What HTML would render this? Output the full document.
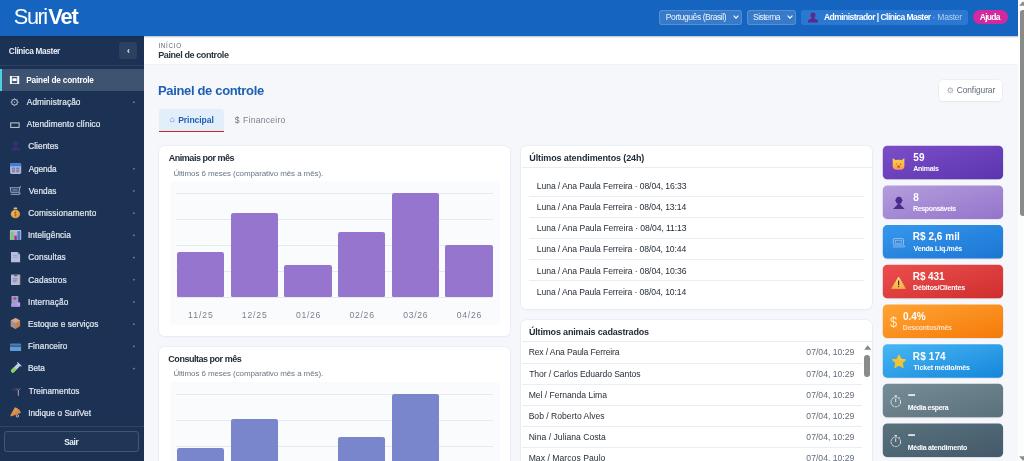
<!DOCTYPE html>
<html lang="pt-BR"><head><meta charset="utf-8"><title>SuriVet - Painel de controle</title>
<style>
html,body{margin:0;padding:0}
body{width:1024px;height:461px;overflow:hidden;position:relative;background:#f5f7fb;font-family:"Liberation Sans",sans-serif}
.a{position:absolute;box-sizing:border-box}
.t{position:absolute;white-space:pre;font-family:"Liberation Sans",sans-serif}
.card{position:absolute;box-sizing:border-box;background:#fff;border-radius:5.5px;box-shadow:0 0 0 .6px rgba(225,230,240,.9),0 1px 2px rgba(30,50,90,.05)}
.hl{position:absolute;height:1px;background:#eaedf1}
.gl{position:absolute;height:1px;background:#e6e9ee;left:176px;width:316.8px}
.bar{position:absolute;width:47.3px;border-radius:2.2px 2.2px 1.5px 1.5px}
.b1{background:#9575cd}.b2{background:#7986cb}
.sc{position:absolute;left:882.8px;width:120.3px;height:33.3px;border-radius:4.5px;box-shadow:0 1px 2px rgba(20,30,60,.12)}
.dot{position:absolute;left:133.1px;width:1.7px;height:1.7px;background:#6d83a8;transform:rotate(45deg)}
svg{position:absolute;overflow:visible}
#w,#tx{position:absolute;left:0;top:0;width:1024px;height:461px;overflow:hidden;filter:blur(.3px)}
</style></head><body><div id="w">

<!-- ================= HEADER ================= -->
<div class="a" id="hdr" style="left:0;top:0;width:1017.6px;height:36px;background:#1565c0"></div>
<div class="a" style="left:659px;top:9.5px;width:82.8px;height:15.5px;border-radius:3px;background:rgba(255,255,255,.14);border:1px solid rgba(255,255,255,.16)"></div>
<svg style="left:733px;top:15.2px" width="6" height="4" viewBox="0 0 6 4"><path d="M.6.7 3 3.1 5.4.7" fill="none" stroke="#fff" stroke-width="1.1"/></svg>
<div class="a" style="left:746.7px;top:9.5px;width:49px;height:15.5px;border-radius:3px;background:rgba(255,255,255,.14);border:1px solid rgba(255,255,255,.16)"></div>
<svg style="left:786.8px;top:15.2px" width="6" height="4" viewBox="0 0 6 4"><path d="M.6.7 3 3.1 5.4.7" fill="none" stroke="#fff" stroke-width="1.1"/></svg>
<div class="a" style="left:800.8px;top:9.5px;width:167.2px;height:15.3px;border-radius:3px;background:#2a78d2"></div>
<svg style="left:808.4px;top:11.6px" width="10" height="10.6" viewBox="0 0 20 21"><path d="M10 1c3 0 5 2.300 5 5.400 0 2-.8 3.800-2 4.900v1.500c3.500.9 6.500 2.600 7 5.600V21H0v-2.600c.5-3 3.500-4.700 7-5.600v-1.500C5.800 10.200 5 8.400 5 6.400 5 3.300 7 1 10 1z" fill="#5b2b8c"/></svg>
<div class="a" style="left:973.4px;top:9.8px;width:34.6px;height:14.7px;border-radius:8px;background:#d328a0"></div>

<!-- ================= SIDEBAR ================= -->
<div class="a" id="sb" style="left:0;top:36px;width:144px;height:425px;background:#1c3254"></div>
<div class="a" style="left:0;top:65.3px;width:144px;height:1px;background:rgba(255,255,255,.07)"></div>
<div class="a" style="left:119px;top:42.2px;width:18.2px;height:17.2px;border-radius:3px;background:rgba(255,255,255,.075)"></div>
<svg style="left:126.6px;top:49px" width="2.8" height="4" viewBox="0 0 2.8 4"><path d="M2.200.4.8 2l1.400 1.600" fill="none" stroke="#e6ebf2" stroke-width="1.050"/></svg>
<div class="a" style="left:0;top:68.8px;width:144px;height:22.5px;background:#3e5370"></div>
<div class="a" style="left:0;top:68.8px;width:1.5px;height:22.5px;background:#4dd0e1"></div>
<svg style="left:0;top:0" width="144" height="461" viewBox="0 0 144 461">
<!-- dashboard -->
<rect x="9.9" y="75.9" width="9.3" height="8" rx=".5" fill="#fff"/><rect x="11.9" y="76.7" width="5.3" height="6.500" fill="#3e5370"/><rect x="12.5" y="78.3" width="4.1" height="2.800" fill="#fff"/>
<!-- gear -->
<g stroke="#c6cfdb" fill="none"><circle cx="14.55" cy="102.2" r="2.900" stroke-width=".95"/><path d="M14.550 98.200v1.200M14.550 105v1.200M10.550 102.200h1.200M17.350 102.200h1.200M11.750 99.400l.8.800M16.550 104.200l.8.800M17.350 99.400l-.8.800M12.550 104.200l-.8.800" stroke-width=".9" opacity=".85"/></g><circle cx="14.55" cy="102.2" r=".6" fill="#c6cfdb"/>
<!-- rectangle -->
<rect x="10.700" y="122.900" width="8.400" height="4.500" fill="none" stroke="#c6cfdb" stroke-width="1"/>
<!-- clientes bust -->
<g fill="#3a2f76" opacity=".9"><circle cx="15.800" cy="143.600" r="2.500"/><path d="M11.200 150.600c.3-2.700 2.200-3.800 4.600-3.800s4.300 1.100 4.600 3.800z"/></g>
<!-- calendar -->
<rect x="10.100" y="163.200" width="11.100" height="10.700" rx="1.300" fill="#aeb4d8"/><path d="M10.100 166.200v-1.700a1.300 1.300 0 0 1 1.300-1.300h8.500a1.300 1.300 0 0 1 1.300 1.300v1.700z" fill="#3f7ad4"/><g fill="#7980ab"><rect x="12" y="167.600" width="3.100" height="4.600" rx=".4"/><rect x="16.200" y="167.600" width="3.100" height="4.600" rx=".4"/></g><path d="M12 169.900h7.300" stroke="#aeb4d8" stroke-width=".6"/>
<!-- cart -->
<g fill="none" stroke="#97a6c8" stroke-width="1.050"><path d="M10.300 187.700h9.400l-.7 4.600h-8z"/><path d="M19.600 187.700l1.100-1.300"/><path d="M10.800 194.300h9"/><path d="M19 192.300l1.500 1.600"/></g><rect x="12.300" y="189" width="5.400" height="2.300" fill="#5f7099"/>
<!-- money bag -->
<defs><radialGradient id="mb" cx=".45" cy=".45" r=".6"><stop offset="0" stop-color="#f3c56a"/><stop offset="1" stop-color="#d39034"/></radialGradient></defs>
<path d="M14 207.500h2.800l.6 1.800h-4z" fill="#e9c27a"/><ellipse cx="15.400" cy="214" rx="4.700" ry="4.300" fill="url(#mb)"/><path d="M15.400 211.400v5.200M16.500 212.500c-.5-.6-2.200-.6-2.200.4s2.200.6 2.200 1.700-1.800 1-2.300.3" stroke="#9a5a1e" stroke-width=".7" fill="none"/>
<!-- bar chart -->
<rect x="9.900" y="230" width="11.300" height="10" rx=".8" fill="#b4bccf"/><rect x="10.800" y="231.600" width="2.900" height="8.400" fill="#7ac47c"/><rect x="14.300" y="235.400" width="2.500" height="4.600" fill="#b0307a"/><rect x="14.300" y="232" width="2.500" height="3.400" fill="#c9a9c8"/><rect x="17.400" y="231.200" width="2.800" height="8.800" fill="#3f7fd0"/>
<!-- document -->
<path d="M11 252h6.500l2.600 2.600v7.600H11z" fill="#b7bde0"/><path d="M17.500 252v2.600h2.600z" fill="#8d93bd"/><path d="M12.800 255.600h4.600M12.800 257.200h5.400" stroke="#9b93b8" stroke-width=".7"/>
<!-- clipboard -->
<rect x="11" y="274.500" width="9.300" height="10.400" rx=".7" fill="#c4a494"/><rect x="11" y="274.900" width="8" height="10" rx=".5" fill="#b5bbdd"/><rect x="14" y="274.200" width="3.200" height="2" rx=".5" fill="#596079"/><path d="M12.800 278.700h4.600M12.800 280.200h4.600M12.800 281.700h3.600" stroke="#7b82a8" stroke-width=".8"/>
<!-- hospital -->
<rect x="11.500" y="296" width="6.800" height="10.700" rx=".6" fill="#9a9ec4"/><rect x="16.500" y="302.400" width="3.600" height="4.300" fill="#c0a3e8"/><rect x="11.200" y="303.600" width="7" height="3.100" fill="#b195e0"/><path d="M14.900 296.900v3.200M13.300 298.500h3.200" stroke="#b03a7a" stroke-width="1.100"/>
<!-- package -->
<path d="M15.500 318l4.600 2.600v5.600l-4.600 2.900-4.700-2.900v-5.600z" fill="#bd8354"/><path d="M15.500 318l4.600 2.600-4.600 2.600-4.700-2.600z" fill="#d2ad8c"/><path d="M10.800 320.600l4.700 2.600v5.900l-4.700-2.900z" fill="#a58f92"/>
<!-- credit card -->
<rect x="10" y="343.700" width="11.100" height="7.400" rx=".9" fill="#5f9bd4"/><rect x="10" y="345.300" width="11.100" height="1.500" fill="#2b5887"/><path d="M10 345.300v-.7a.9.900 0 0 1 .9-.9h9.300a.9.900 0 0 1 .9.900v.7z" fill="#4a7db5"/>
<!-- test tube -->
<g transform="rotate(45 15.400 368.200)"><rect x="13.700" y="362.600" width="3.500" height="11" rx="1.700" fill="#b9d2de"/><path d="M13.700 368.400h3.500v3.500a1.750 1.750 0 0 1-3.500 0z" fill="#8fd05a"/><rect x="12.600" y="362.200" width="5.700" height="1.100" fill="#c9dde6"/></g>
<!-- treinamentos -->
<path d="M18.300 395.800v-5.300M18.300 390.600l-1.800-2M18.300 390.600l1.800-2" stroke="#b9c0e0" stroke-width="1" fill="none" opacity=".85"/><path d="M10.800 389.600l4.800-2 4.800 2-4.800 2z" fill="#5b3560" opacity=".6"/>
<!-- megaphone -->
<defs><linearGradient id="mg" x1="0" y1="0" x2="1" y2="1"><stop offset="0" stop-color="#eca858"/><stop offset="1" stop-color="#cf7535"/></linearGradient></defs>
<path d="M14.900 407.200c2.600.6 5.400 3 6.200 5.500l-9.400 3.500c-.9.300-1.500-.4-1.100-1.200z" fill="url(#mg)"/><circle cx="17.400" cy="415.900" r="1.200" fill="none" stroke="#eef0f6" stroke-width=".7"/>
<!-- carets --><path d="M133.900 101.05l1.100 1.100-1.100 1.100-1.100-1.100z" fill="#6f86ad"/><path d="M133.900 167.65l1.100 1.100-1.100 1.100-1.100-1.100z" fill="#6f86ad"/><path d="M133.900 189.85l1.100 1.100-1.100 1.100-1.100-1.100z" fill="#6f86ad"/><path d="M133.900 212.05l1.100 1.100-1.100 1.100-1.100-1.100z" fill="#6f86ad"/><path d="M133.900 234.25l1.100 1.100-1.100 1.100-1.100-1.100z" fill="#6f86ad"/><path d="M133.900 256.45l1.100 1.100-1.100 1.100-1.100-1.100z" fill="#6f86ad"/><path d="M133.900 278.65l1.100 1.100-1.100 1.100-1.100-1.100z" fill="#6f86ad"/><path d="M133.900 300.85l1.100 1.100-1.100 1.100-1.100-1.100z" fill="#6f86ad"/><path d="M133.900 323.05l1.100 1.100-1.100 1.100-1.100-1.100z" fill="#6f86ad"/><path d="M133.900 345.25l1.100 1.100-1.100 1.100-1.100-1.100z" fill="#6f86ad"/><path d="M133.900 367.45l1.100 1.100-1.100 1.100-1.100-1.100z" fill="#6f86ad"/>
</svg>

<div class="a" style="left:0;top:425.5px;width:144px;height:1px;background:rgba(255,255,255,.09)"></div>
<div class="a" style="left:4.1px;top:431px;width:135px;height:21.4px;border-radius:3.5px;border:1px solid rgba(255,255,255,.16);background:rgba(255,255,255,.02)"></div>

<!-- ================= MAIN TOP ================= -->
<div class="a" style="left:144px;top:36px;width:873.6px;height:29px;background:#fff;border-bottom:1px solid #f0f2f7"></div>
<div class="a" style="left:939px;top:80px;width:63px;height:20.5px;border-radius:4px;background:#fff;box-shadow:0 0 0 .5px #e4e8ef,0 1px 2px rgba(30,50,90,.07)"></div>
<svg style="left:946.6px;top:87.4px" width="6.600" height="6.600" viewBox="0 0 12 12"><circle cx="6" cy="6" r="3.900" fill="none" stroke="#9aa3b0" stroke-width="1.500"/><circle cx="6" cy="6" r="1" fill="#9aa3b0"/><path d="M6 .4v1.700M6 9.900v1.700M.4 6h1.700M9.900 6h1.700M2 2l1.200 1.200M8.800 8.800L10 10M10 2L8.800 3.200M3.200 8.800L2 10" stroke="#9aa3b0" stroke-width="1.500"/></svg>
<div class="a" style="left:158.7px;top:108.7px;width:65.1px;height:23.8px;border-radius:3px 3px 0 0;background:#e3eefb;border-bottom:1.5px solid #c62828"></div>
<svg style="left:169.8px;top:117.3px" width="4.600" height="5.200" viewBox="0 0 9 10"><path d="M4.500 1 1 4.600V9h7V4.600z" fill="none" stroke="#7fa5d8" stroke-width="1.400"/></svg>

<!-- ================= CARD: Animais por mes ================= -->
<div class="card" style="left:159px;top:146px;width:351px;height:190px"></div>
<div class="a" style="left:170px;top:181px;width:330px;height:144px;border-radius:4.5px;background:#fafbfd"></div>
<div class="gl" style="top:192.7px"></div><div class="gl" style="top:218.7px"></div><div class="gl" style="top:244.7px"></div><div class="gl" style="top:270.7px"></div><div class="gl" style="top:296.7px"></div>
<div class="bar b1" style="left:177.1px;top:251.9px;height:45.1px"></div>
<div class="bar b1" style="left:230.7px;top:213px;height:84px"></div>
<div class="bar b1" style="left:284.4px;top:264.7px;height:32.3px"></div>
<div class="bar b1" style="left:338px;top:232.1px;height:64.9px"></div>
<div class="bar b1" style="left:391.6px;top:193.2px;height:103.8px"></div>
<div class="bar b1" style="left:445.3px;top:244.9px;height:52.1px"></div>

<!-- ================= CARD: Consultas por mes ================= -->
<div class="card" style="left:159px;top:347px;width:351px;height:190px"></div>
<div class="a" style="left:170px;top:382px;width:330px;height:144px;border-radius:4.5px;background:#fafbfd"></div>
<div class="gl" style="top:393.9px"></div><div class="gl" style="top:419.9px"></div><div class="gl" style="top:445.9px"></div>
<div class="bar b2" style="left:177.1px;top:448.2px;height:50px"></div>
<div class="bar b2" style="left:230.7px;top:419.2px;height:79px"></div>
<div class="bar b2" style="left:338px;top:437px;height:61px"></div>
<div class="bar b2" style="left:391.6px;top:394.4px;height:104px"></div>

<!-- ================= CARD: Ultimos atendimentos ================= -->
<div class="card" style="left:521px;top:146px;width:351px;height:163px"></div>
<div class="hl" style="left:521.6px;top:166.8px;width:350.3px;background:#e9ecf1"></div>
<div class="hl" style="left:528.9px;top:195.5px;width:335px"></div>
<div class="hl" style="left:528.9px;top:216.7px;width:335px"></div>
<div class="hl" style="left:528.9px;top:237.9px;width:335px"></div>
<div class="hl" style="left:528.9px;top:259.1px;width:335px"></div>
<div class="hl" style="left:528.9px;top:280.3px;width:335px"></div>

<!-- ================= CARD: Ultimos animais ================= -->
<div class="card" style="left:521px;top:320px;width:351px;height:180px"></div>
<div class="hl" style="left:521.6px;top:341.1px;width:350.3px;background:#e9ecf1"></div>
<div class="hl" style="left:521.6px;top:362.6px;width:340.7px"></div>
<div class="hl" style="left:521.6px;top:383.8px;width:340.7px"></div>
<div class="hl" style="left:521.6px;top:405px;width:340.7px"></div>
<div class="hl" style="left:521.6px;top:426.2px;width:340.7px"></div>
<div class="hl" style="left:521.6px;top:447.4px;width:340.7px"></div>
<svg style="left:863.8px;top:344.8px" width="7.400" height="5" viewBox="0 0 7.400 5"><path d="M3.700.2 7.200 4.800H.2z" fill="#858585"/></svg>
<div class="a" style="left:864.2px;top:354.6px;width:5.8px;height:22.2px;border-radius:2.900px;background:#8a8a8a"></div>

<!-- ================= STAT CARDS ================= -->
<svg style="left:0;top:0" width="1024" height="461" viewBox="0 0 1024 461"><defs>
<linearGradient id="sg0" x1="0" y1="0" x2="1" y2="1"><stop offset="0" stop-color="#7c4ec8"/><stop offset="1" stop-color="#5b35ae"/></linearGradient>
<linearGradient id="sg1" x1="0" y1="0" x2="1" y2="1"><stop offset="0" stop-color="#b49edc"/><stop offset="1" stop-color="#9474cc"/></linearGradient>
<linearGradient id="sg2" x1="0" y1="0" x2="1" y2="1"><stop offset="0" stop-color="#3797ed"/><stop offset="1" stop-color="#1b76d3"/></linearGradient>
<linearGradient id="sg3" x1="0" y1="0" x2="1" y2="1"><stop offset="0" stop-color="#ec4e4e"/><stop offset="1" stop-color="#cf2e2e"/></linearGradient>
<linearGradient id="sg4" x1="0" y1="0" x2="1" y2="1"><stop offset="0" stop-color="#ffa535"/><stop offset="1" stop-color="#f57a08"/></linearGradient>
<linearGradient id="sg5" x1="0" y1="0" x2="1" y2="1"><stop offset="0" stop-color="#48b7f4"/><stop offset="1" stop-color="#1586db"/></linearGradient>
<linearGradient id="sg6" x1="0" y1="0" x2="1" y2="1"><stop offset="0" stop-color="#768d98"/><stop offset="1" stop-color="#5a717c"/></linearGradient>
<linearGradient id="sg7" x1="0" y1="0" x2="1" y2="1"><stop offset="0" stop-color="#59727d"/><stop offset="1" stop-color="#44596a"/></linearGradient>
</defs>
<rect x="882.8" y="146.60" width="120.3" height="33.5" rx="4.500" fill="#1e2a4a" opacity=".10"/>
<rect x="882.8" y="145.70" width="120.3" height="33.5" rx="4.500" fill="url(#sg0)"/>
<rect x="882.8" y="186.29" width="120.3" height="33.5" rx="4.500" fill="#1e2a4a" opacity=".10"/>
<rect x="882.8" y="185.39" width="120.3" height="33.5" rx="4.500" fill="url(#sg1)"/>
<rect x="882.8" y="225.98" width="120.3" height="33.5" rx="4.500" fill="#1e2a4a" opacity=".10"/>
<rect x="882.8" y="225.08" width="120.3" height="33.5" rx="4.500" fill="url(#sg2)"/>
<rect x="882.8" y="265.67" width="120.3" height="33.5" rx="4.500" fill="#1e2a4a" opacity=".10"/>
<rect x="882.8" y="264.77" width="120.3" height="33.5" rx="4.500" fill="url(#sg3)"/>
<rect x="882.8" y="305.36" width="120.3" height="33.5" rx="4.500" fill="#1e2a4a" opacity=".10"/>
<rect x="882.8" y="304.46" width="120.3" height="33.5" rx="4.500" fill="url(#sg4)"/>
<rect x="882.8" y="345.05" width="120.3" height="33.5" rx="4.500" fill="#1e2a4a" opacity=".10"/>
<rect x="882.8" y="344.15" width="120.3" height="33.5" rx="4.500" fill="url(#sg5)"/>
<rect x="882.8" y="384.74" width="120.3" height="33.5" rx="4.500" fill="#1e2a4a" opacity=".10"/>
<rect x="882.8" y="383.84" width="120.3" height="33.5" rx="4.500" fill="url(#sg6)"/>
<rect x="882.8" y="424.43" width="120.3" height="33.5" rx="4.500" fill="#1e2a4a" opacity=".10"/>
<rect x="882.8" y="423.53" width="120.3" height="33.5" rx="4.500" fill="url(#sg7)"/>
</svg>
<svg style="left:0;top:0" width="1024" height="461" viewBox="0 0 1024 461">
<defs><linearGradient id="cat" x1="0" y1="0" x2="0" y2="1"><stop offset="0" stop-color="#ffcf45"/><stop offset=".6" stop-color="#fdb94a"/><stop offset="1" stop-color="#f4935e"/></linearGradient>
<linearGradient id="wr" x1="0" y1="0" x2="0" y2="1"><stop offset="0" stop-color="#ffd98a"/><stop offset="1" stop-color="#f6ae3e"/></linearGradient></defs>
<!-- cat -->
<path d="M892.700 158l3 2.300c1.800-.6 3.900-.6 5.700 0l3-2.300v8.200c0 2.200-1.600 3.500-3.600 3.500h-4.500c-2 0-3.600-1.300-3.600-3.500z" fill="url(#cat)"/>
<ellipse cx="898.600" cy="166.700" rx="1.300" ry="1.100" fill="#d8333a"/><circle cx="900.700" cy="164.100" r=".6" fill="#5b3a1e"/><path d="M895.800 164.300l1.300-.5" stroke="#7a4a1e" stroke-width=".6"/>
<!-- bust -->
<g fill="#4c2c8a"><ellipse cx="898.900" cy="200.300" rx="3.200" ry="3.600"/><rect x="895.300" y="199.400" width="7.200" height="1.800" rx=".9"/><path d="M893 208.900l3.800-3.600 1-1.400h2.200l1 1.400 3.700 3.600z"/></g>
<!-- laptop -->
<g fill="none" stroke="#b7cdea" opacity=".75"><rect x="893.300" y="238.600" width="10.200" height="6.400" rx=".8" stroke-width="1"/><rect x="895.500" y="240.300" width="5.800" height="3" stroke-width=".7"/><path d="M892.800 246.900h11.800M903.800 245l.8 1.900" stroke-width=".9"/></g>
<!-- warning -->
<path d="M898.600 277l6.800 11.500h-13.700z" fill="url(#wr)" stroke="url(#wr)" stroke-width=".8" stroke-linejoin="round"/><path d="M898.600 280.400v4.500" stroke="#4a2a0c" stroke-width="1.200"/><circle cx="898.600" cy="286.500" r=".65" fill="#4a2a0c"/>
<!-- star -->
<path d="M899 354.900l2.050 4.300 4.700.55-3.480 3.200.93 4.650-4.200-2.350-4.200 2.350.93-4.650-3.480-3.200 4.700-.55z" fill="#f3c431" stroke="#f3c431" stroke-width="1" stroke-linejoin="round"/>
<path d="M899 356.500l1.300 3 3 .4" fill="none" stroke="#f9dc6a" stroke-width=".7" opacity=".8"/>
<!-- stopwatches -->
<g fill="none" stroke="#f2f5f7" opacity=".9"><circle cx="895.800" cy="402" r="4.800" stroke-width=".95" stroke-dasharray="2.400 .6"/><path d="M895.700 398.600v3.500" stroke-width=".95"/><path d="M894.500 395.900h2.400" stroke-width="1.300"/><path d="M899.200 398.100l.8-.8" stroke-width=".9"/></g>
<g transform="translate(0 39.800)" fill="none" stroke="#f2f5f7" opacity=".9"><circle cx="895.800" cy="402" r="4.800" stroke-width=".95" stroke-dasharray="2.400 .6"/><path d="M895.700 398.600v3.500" stroke-width=".95"/><path d="M894.500 395.900h2.400" stroke-width="1.300"/><path d="M899.200 398.100l.8-.8" stroke-width=".9"/></g>
<!-- dashes -->
<rect x="908.200" y="394.300" width="6.800" height="1.500" fill="#fff"/><rect x="908.200" y="434.300" width="6.800" height="1.500" fill="#fff"/>
</svg>

<div class="a" style="left:0;top:36px;width:1017.6px;height:2px;background:linear-gradient(rgba(8,30,80,.30),rgba(8,30,80,0))"></div>
<!-- ================= PAGE SCROLLBAR ================= -->
<div class="a" style="left:1017.6px;top:0;width:6.4px;height:461px;background:#fcfcfc"></div>
<div class="a" style="left:1020.2px;top:9.8px;width:8px;height:206.4px;border-radius:3px;background:#8a8a8a"></div>
<svg style="left:1019px;top:0.8px" width="8" height="5" viewBox="0 0 8 5"><path d="M4 .2 7.800 4.800H.2z" fill="#8a8a8a"/></svg>
<svg style="left:1019px;top:455.6px" width="8" height="5" viewBox="0 0 8 5"><path d="M.2.2h7.600L4 4.800z" fill="#8a8a8a"/></svg>

</div>
<div id="tx">
<div class="t" style="left:13.85px;top:6.00px;font-size:21.8px;line-height:21.8px;letter-spacing:-1.483px;color:#ffffff;">Suri</div>
<div class="t" style="left:48.35px;top:6.00px;font-size:21.8px;line-height:21.8px;font-weight:700;letter-spacing:-1.100px;color:#ffffff;">Vet</div>
<div class="t" style="left:665.85px;top:13.00px;font-size:8.5px;line-height:8.5px;letter-spacing:-0.429px;color:#f2f6fc;">Português (Brasil)</div>
<div class="t" style="left:753.00px;top:13.00px;font-size:8.5px;line-height:8.5px;letter-spacing:-0.542px;color:#f2f6fc;">Sistema</div>
<div class="t" style="left:823.95px;top:13.00px;font-size:8.5px;line-height:8.5px;font-weight:700;letter-spacing:-0.538px;color:#ffffff;">Administrador | Clínica Master</div>
<div class="t" style="left:932.50px;top:13.00px;font-size:8.5px;line-height:8.5px;letter-spacing:-0.214px;color:#b9cfec;">· Master</div>
<div class="t" style="left:979.75px;top:13.00px;font-size:8.5px;line-height:8.5px;font-weight:700;letter-spacing:-0.725px;color:#ffffff;">Ajuda</div>
<div class="t" style="left:8.85px;top:48.00px;font-size:8.25px;line-height:8.25px;font-weight:700;letter-spacing:-0.342px;color:#e6ebf2;">Clínica Master</div>
<div class="t" style="left:26.30px;top:77.00px;font-size:8.25px;line-height:8.25px;font-weight:700;letter-spacing:-0.200px;color:#ffffff;">Painel de controle</div>
<div class="t" style="left:26.80px;top:99.00px;font-size:8.25px;line-height:8.25px;letter-spacing:0.113px;color:#dfe6ef;-webkit-text-stroke:.22px #dfe6ef;">Administração</div>
<div class="t" style="left:26.80px;top:121.00px;font-size:8.25px;line-height:8.25px;letter-spacing:0.089px;color:#dfe6ef;-webkit-text-stroke:.22px #dfe6ef;">Atendimento clínico</div>
<div class="t" style="left:28.20px;top:143.00px;font-size:8.25px;line-height:8.25px;letter-spacing:0.071px;color:#dfe6ef;-webkit-text-stroke:.22px #dfe6ef;">Clientes</div>
<div class="t" style="left:28.70px;top:166.00px;font-size:8.25px;line-height:8.25px;letter-spacing:-0.110px;color:#dfe6ef;-webkit-text-stroke:.22px #dfe6ef;">Agenda</div>
<div class="t" style="left:28.70px;top:188.00px;font-size:8.25px;line-height:8.25px;letter-spacing:0.050px;color:#dfe6ef;-webkit-text-stroke:.22px #dfe6ef;">Vendas</div>
<div class="t" style="left:28.20px;top:210.00px;font-size:8.25px;line-height:8.25px;letter-spacing:0.154px;color:#dfe6ef;-webkit-text-stroke:.22px #dfe6ef;">Comissionamento</div>
<div class="t" style="left:27.95px;top:232.00px;font-size:8.25px;line-height:8.25px;letter-spacing:0.105px;color:#dfe6ef;-webkit-text-stroke:.22px #dfe6ef;">Inteligência</div>
<div class="t" style="left:28.20px;top:254.00px;font-size:8.25px;line-height:8.25px;letter-spacing:0.106px;color:#dfe6ef;-webkit-text-stroke:.22px #dfe6ef;">Consultas</div>
<div class="t" style="left:28.20px;top:277.00px;font-size:8.25px;line-height:8.25px;letter-spacing:0.112px;color:#dfe6ef;-webkit-text-stroke:.22px #dfe6ef;">Cadastros</div>
<div class="t" style="left:27.95px;top:299.00px;font-size:8.25px;line-height:8.25px;letter-spacing:0.150px;color:#dfe6ef;-webkit-text-stroke:.22px #dfe6ef;">Internação</div>
<div class="t" style="left:27.95px;top:321.00px;font-size:8.25px;line-height:8.25px;letter-spacing:0.041px;color:#dfe6ef;-webkit-text-stroke:.22px #dfe6ef;">Estoque e serviços</div>
<div class="t" style="left:27.95px;top:343.00px;font-size:8.25px;line-height:8.25px;letter-spacing:0.111px;color:#dfe6ef;-webkit-text-stroke:.22px #dfe6ef;">Financeiro</div>
<div class="t" style="left:27.95px;top:365.00px;font-size:8.25px;line-height:8.25px;letter-spacing:-0.033px;color:#dfe6ef;-webkit-text-stroke:.22px #dfe6ef;">Beta</div>
<div class="t" style="left:28.65px;top:388.00px;font-size:8.25px;line-height:8.25px;letter-spacing:0.064px;color:#dfe6ef;-webkit-text-stroke:.22px #dfe6ef;">Treinamentos</div>
<div class="t" style="left:28.15px;top:410.00px;font-size:8.25px;line-height:8.25px;color:#dfe6ef;-webkit-text-stroke:.22px #dfe6ef;">Indique o SuriVet</div>
<div class="t" style="left:64.15px;top:439.00px;font-size:8.25px;line-height:8.25px;font-weight:700;letter-spacing:-0.367px;color:#eef2f7;">Sair</div>
<div class="t" style="left:158.40px;top:43.00px;font-size:6.3px;line-height:6.3px;letter-spacing:0.700px;color:#5f6875;">INÍCIO</div>
<div class="t" style="left:158.20px;top:51.00px;font-size:9.0px;line-height:9.0px;font-weight:700;letter-spacing:-0.400px;color:#2b3440;">Painel de controle</div>
<div class="t" style="left:157.95px;top:84.00px;font-size:13.0px;line-height:13.0px;font-weight:700;letter-spacing:-0.338px;color:#1e5fb4;">Painel de controle</div>
<div class="t" style="left:178.20px;top:116.00px;font-size:8.6px;line-height:8.6px;font-weight:700;letter-spacing:-0.081px;color:#1e5fb4;">Principal</div>
<div class="t" style="left:234.75px;top:116.00px;font-size:8.6px;line-height:8.6px;color:#6b7280;">$</div>
<div class="t" style="left:243.05px;top:116.00px;font-size:8.6px;line-height:8.6px;letter-spacing:0.233px;color:#7a8390;">Financeiro</div>
<div class="t" style="left:956.70px;top:86.00px;font-size:8.4px;line-height:8.4px;letter-spacing:-0.061px;color:#5f6b7a;">Configurar</div>
<div class="t" style="left:168.75px;top:154.00px;font-size:9.0px;line-height:9.0px;font-weight:700;letter-spacing:-0.475px;color:#222b36;">Animais por mês</div>
<div class="t" style="left:173.40px;top:170.00px;font-size:8.0px;line-height:8.0px;letter-spacing:-0.103px;color:#6b7785;">Últimos 6 meses (comparativo mês a mês).</div>
<div class="t" style="left:168.35px;top:355.00px;font-size:9.0px;line-height:9.0px;font-weight:700;letter-spacing:-0.478px;color:#222b36;">Consultas por mês</div>
<div class="t" style="left:173.40px;top:370.00px;font-size:8.0px;line-height:8.0px;letter-spacing:-0.103px;color:#6b7785;">Últimos 6 meses (comparativo mês a mês).</div>
<div class="t" style="left:188.12px;top:311.00px;font-size:8.6px;line-height:8.6px;letter-spacing:0.975px;color:#76828f;">11/25</div>
<div class="t" style="left:241.75px;top:311.00px;font-size:8.6px;line-height:8.6px;letter-spacing:0.850px;color:#76828f;">12/25</div>
<div class="t" style="left:295.88px;top:311.00px;font-size:8.6px;line-height:8.6px;letter-spacing:0.725px;color:#76828f;">01/26</div>
<div class="t" style="left:349.51px;top:311.00px;font-size:8.6px;line-height:8.6px;letter-spacing:0.725px;color:#76828f;">02/26</div>
<div class="t" style="left:403.14px;top:311.00px;font-size:8.6px;line-height:8.6px;letter-spacing:0.725px;color:#76828f;">03/26</div>
<div class="t" style="left:456.77px;top:311.00px;font-size:8.6px;line-height:8.6px;letter-spacing:0.725px;color:#76828f;">04/26</div>
<div class="t" style="left:529.30px;top:154.00px;font-size:9.0px;line-height:9.0px;font-weight:700;letter-spacing:-0.118px;color:#222b36;">Últimos atendimentos (24h)</div>
<div class="t" style="left:536.85px;top:182.00px;font-size:8.6px;line-height:8.6px;letter-spacing:-0.095px;color:#1f2833;">Luna / Ana Paula Ferreira · 08/04, 16:33</div>
<div class="t" style="left:536.85px;top:203.00px;font-size:8.6px;line-height:8.6px;letter-spacing:-0.101px;color:#1f2833;">Luna / Ana Paula Ferreira · 08/04, 13:14</div>
<div class="t" style="left:536.85px;top:224.00px;font-size:8.6px;line-height:8.6px;letter-spacing:-0.076px;color:#1f2833;">Luna / Ana Paula Ferreira · 08/04, 11:13</div>
<div class="t" style="left:536.85px;top:245.00px;font-size:8.6px;line-height:8.6px;letter-spacing:-0.101px;color:#1f2833;">Luna / Ana Paula Ferreira · 08/04, 10:44</div>
<div class="t" style="left:536.85px;top:267.00px;font-size:8.6px;line-height:8.6px;letter-spacing:-0.095px;color:#1f2833;">Luna / Ana Paula Ferreira · 08/04, 10:36</div>
<div class="t" style="left:536.85px;top:288.00px;font-size:8.6px;line-height:8.6px;letter-spacing:-0.101px;color:#1f2833;">Luna / Ana Paula Ferreira · 08/04, 10:14</div>
<div class="t" style="left:528.90px;top:328.00px;font-size:9.0px;line-height:9.0px;font-weight:700;letter-spacing:-0.167px;color:#222b36;">Últimos animais cadastrados</div>
<div class="t" style="left:528.65px;top:348.00px;font-size:8.6px;line-height:8.6px;letter-spacing:-0.137px;color:#1f2833;">Rex / Ana Paula Ferreira</div>
<div class="t" style="left:806.35px;top:348.00px;font-size:8.6px;line-height:8.6px;letter-spacing:0.018px;color:#5f6b7a;">07/04, 10:29</div>
<div class="t" style="left:529.15px;top:370.00px;font-size:8.6px;line-height:8.6px;letter-spacing:-0.087px;color:#1f2833;">Thor / Carlos Eduardo Santos</div>
<div class="t" style="left:806.35px;top:370.00px;font-size:8.6px;line-height:8.6px;letter-spacing:0.018px;color:#5f6b7a;">07/04, 10:29</div>
<div class="t" style="left:528.65px;top:391.00px;font-size:8.6px;line-height:8.6px;letter-spacing:-0.025px;color:#1f2833;">Mel / Fernanda Lima</div>
<div class="t" style="left:806.35px;top:391.00px;font-size:8.6px;line-height:8.6px;letter-spacing:0.018px;color:#5f6b7a;">07/04, 10:29</div>
<div class="t" style="left:528.65px;top:412.00px;font-size:8.6px;line-height:8.6px;color:#1f2833;">Bob / Roberto Alves</div>
<div class="t" style="left:806.35px;top:412.00px;font-size:8.6px;line-height:8.6px;letter-spacing:0.018px;color:#5f6b7a;">07/04, 10:29</div>
<div class="t" style="left:528.65px;top:433.00px;font-size:8.6px;line-height:8.6px;letter-spacing:0.008px;color:#1f2833;">Nina / Juliana Costa</div>
<div class="t" style="left:806.35px;top:433.00px;font-size:8.6px;line-height:8.6px;letter-spacing:0.018px;color:#5f6b7a;">07/04, 10:29</div>
<div class="t" style="left:528.65px;top:454.00px;font-size:8.6px;line-height:8.6px;letter-spacing:0.047px;color:#1f2833;">Max / Marcos Paulo</div>
<div class="t" style="left:806.35px;top:454.00px;font-size:8.6px;line-height:8.6px;letter-spacing:0.018px;color:#5f6b7a;">07/04, 10:29</div>
<div class="t" style="left:913.35px;top:153.00px;font-size:10.0px;line-height:10.0px;font-weight:700;color:#ffffff;">59</div>
<div class="t" style="left:913.35px;top:165.00px;font-size:7.0px;line-height:7.0px;font-weight:700;letter-spacing:-0.300px;color:#ffffff;">Animais</div>
<div class="t" style="left:913.35px;top:193.00px;font-size:10.0px;line-height:10.0px;font-weight:700;color:#ffffff;">8</div>
<div class="t" style="left:913.10px;top:205.00px;font-size:7.0px;line-height:7.0px;font-weight:700;letter-spacing:-0.368px;color:#ffffff;">Responsáveis</div>
<div class="t" style="left:912.85px;top:232.00px;font-size:10.0px;line-height:10.0px;font-weight:700;letter-spacing:0.022px;color:#ffffff;">R$ 2,6 mil</div>
<div class="t" style="left:913.60px;top:245.00px;font-size:7.0px;line-height:7.0px;font-weight:700;letter-spacing:-0.177px;color:#ffffff;">Venda Liq./mês</div>
<div class="t" style="left:912.85px;top:272.00px;font-size:10.0px;line-height:10.0px;font-weight:700;letter-spacing:-0.130px;color:#ffffff;">R$ 431</div>
<div class="t" style="left:913.10px;top:284.00px;font-size:7.0px;line-height:7.0px;font-weight:700;letter-spacing:-0.193px;color:#ffffff;">Débitos/Clientes</div>
<div class="t" style="left:903.05px;top:312.00px;font-size:10.0px;line-height:10.0px;font-weight:700;letter-spacing:-0.100px;color:#ffffff;">0.4%</div>
<div class="t" style="left:902.80px;top:324.00px;font-size:7.0px;line-height:7.0px;font-weight:700;letter-spacing:-0.212px;color:#ffffff;opacity:0.72;">Descontos/mês</div>
<div class="t" style="left:912.85px;top:352.00px;font-size:10.0px;line-height:10.0px;font-weight:700;letter-spacing:0.110px;color:#ffffff;">R$ 174</div>
<div class="t" style="left:913.60px;top:364.00px;font-size:7.0px;line-height:7.0px;font-weight:700;letter-spacing:-0.147px;color:#ffffff;">Ticket médio/mês</div>
<div class="t" style="left:907.70px;top:404.00px;font-size:7.0px;line-height:7.0px;font-weight:700;letter-spacing:-0.314px;color:#ffffff;">Média espera</div>
<div class="t" style="left:907.70px;top:444.00px;font-size:7.0px;line-height:7.0px;font-weight:700;letter-spacing:-0.234px;color:#ffffff;">Média atendimento</div>
<div class="t" style="left:889.95px;top:315.00px;font-size:14.6px;line-height:14.6px;color:#ffedc2;transform:scaleX(.88);transform-origin:0 0;">$</div>
</div></body></html>
